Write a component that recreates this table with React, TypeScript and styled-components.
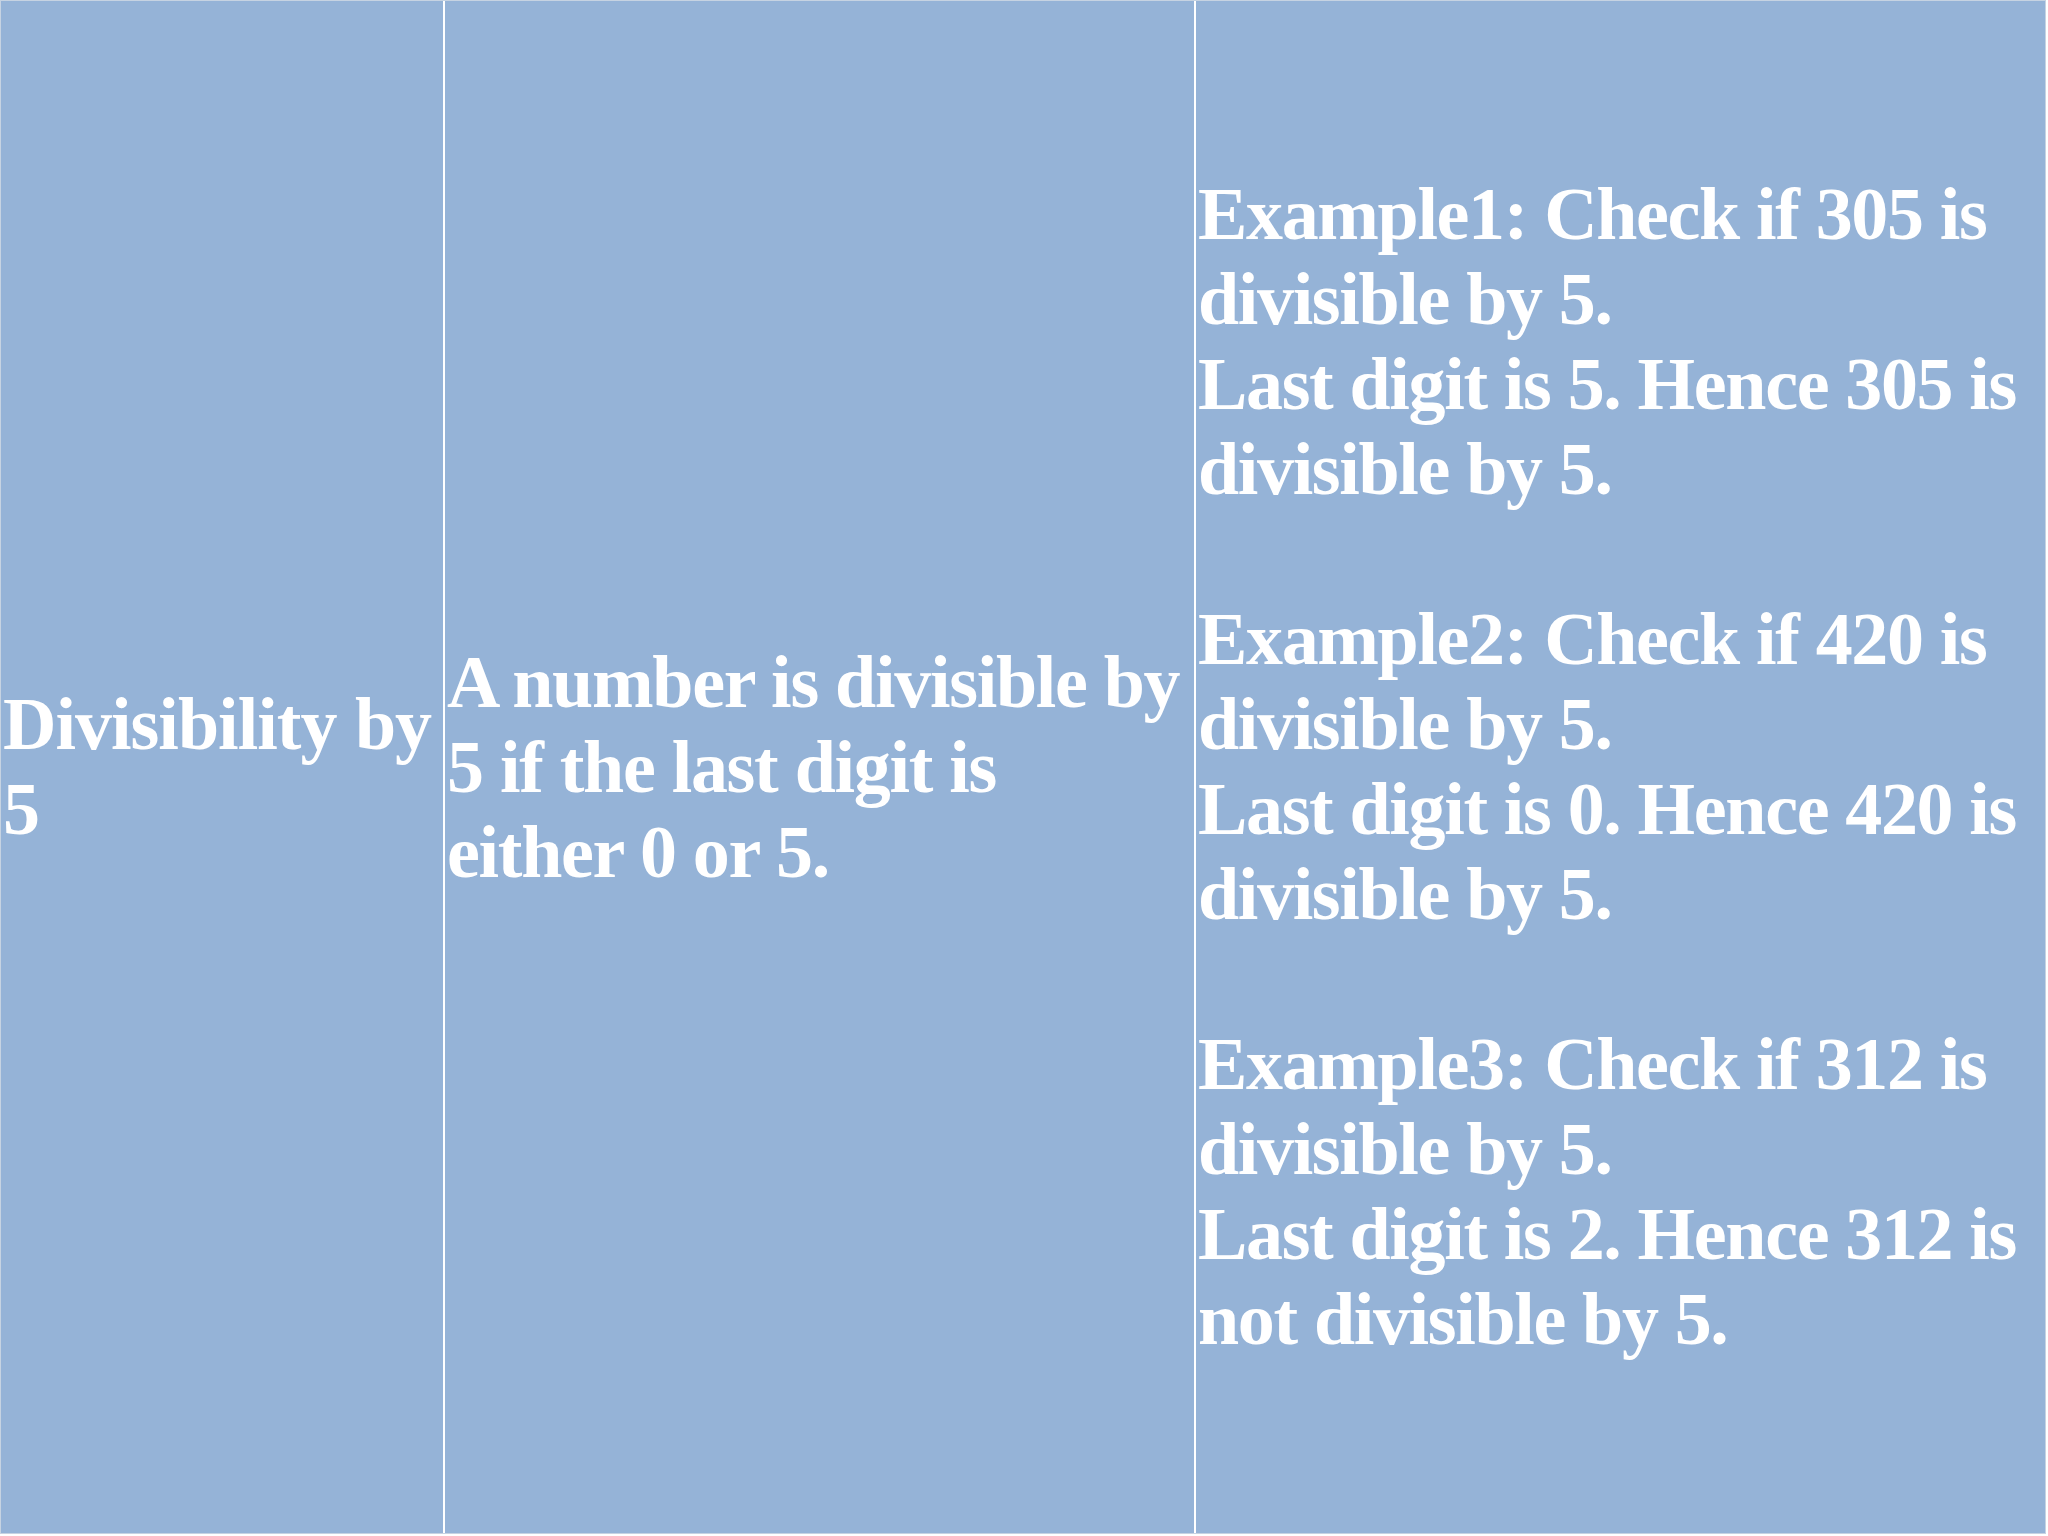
import React from "react"
import styled, { createGlobalStyle } from "styled-components"

const GlobalStyle = createGlobalStyle`
  html, body {
    margin: 0;
    padding: 0;
    background: #ffffff;
  }
`

const Table = styled.div`
  display: grid;
  grid-template-columns: 442px 749px 849px;
  grid-template-rows: 1532px;
  column-gap: 2px;
  width: 2044px;
  border: 1px solid #c6d3e2;
  background: #ffffff;
`

const Cell = styled.div<{ $spacing: string; $wordSpacing?: string }>`
  display: flex;
  flex-direction: column;
  justify-content: center;
  background: #95b3d7;
  padding: 0 2px 0 2px;
  color: #ffffff;
  font-family: "Liberation Serif", "Times New Roman", serif;
  font-weight: 700;
  font-size: 74px;
  line-height: 85px;
  letter-spacing: ${(p) => p.$spacing};
  word-spacing: ${(p) => p.$wordSpacing ?? "0"};
`

const Line = styled.div`
  white-space: nowrap;
  min-height: 85px;
`

const examples = [
  ["Example1: Check if 305 is", "divisible by 5.", "Last digit is 5. Hence 305 is", "divisible by 5."],
  ["Example2: Check if 420 is", "divisible by 5.", "Last digit is 0. Hence 420 is", "divisible by 5."],
  ["Example3: Check if 312 is", "divisible by 5.", "Last digit is 2. Hence 312 is", "not divisible by 5."],
]

const App: React.FC = () => {
  const lines: string[] = []
  examples.forEach((ex, i) => {
    if (i > 0) lines.push("")
    lines.push(...ex)
  })

  return (
    <>
      <GlobalStyle />
      <Table>
        <Cell $spacing="-1px" $wordSpacing="1px">
          <Line>Divisibility by</Line>
          <Line>5</Line>
        </Cell>
        <Cell $spacing="-1.3px">
          <Line>A number is divisible by</Line>
          <Line>5 if the last digit is</Line>
          <Line>either 0 or 5.</Line>
        </Cell>
        <Cell $spacing="-1.35px">
          {lines.map((l, i) => (
            <Line key={i}>{l}</Line>
          ))}
        </Cell>
      </Table>
    </>
  )
}

export default App
